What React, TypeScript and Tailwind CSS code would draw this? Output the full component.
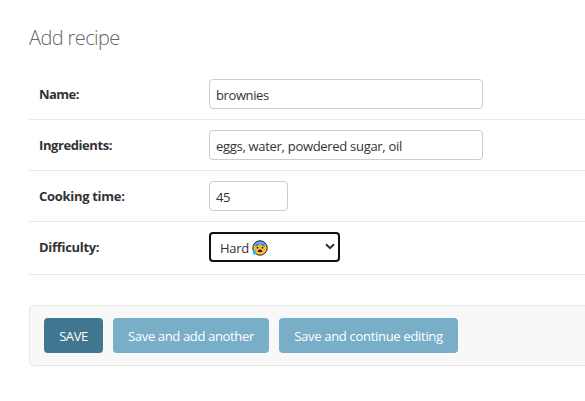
import React from 'react';

function AnxiousFace() {
  return (
    <svg className="ml-[3px] mb-[2px] h-4 w-4 shrink-0" viewBox="0 0 16 16" aria-label="Anxious face with sweat">
      <circle cx="8" cy="8" r="7.2" fill="#fdbb2c" />
      <path d="M1.100 6.600C1.800 2.900 4.600.8 8 .8s6.200 2.100 6.900 5.800C12.800 6 10.500 5.400 8 5.400S3.200 6 1.100 6.600Z" fill="#69a9e6" />
      <circle cx="8" cy="8" r="7.2" fill="none" stroke="#25282c" strokeWidth="1" />
      <path d="M4 5.600 6 4.400M10 4.400l2 1.200" stroke="#30343a" strokeWidth=".8" strokeLinecap="round" />
      <circle cx="5.500" cy="7.700" r=".9" fill="#222" />
      <circle cx="10.500" cy="7.700" r=".9" fill="#222" />
      <path d="M5.700 12c.3-1.700 1.100-2.400 2.300-2.400s2 .7 2.300 2.400Z" fill="#222" />
      <path d="M2.500 9.300C1.500 10.700.7 11.900.7 13a1.800 1.800 0 0 0 3.600 0c0-1.100-.8-2.300-1.800-3.700Z" fill="#22bdf2" />
    </svg>
  );
}

function Row({ label, last = false, children }: { label: React.ReactNode; last?: boolean; children: React.ReactNode }) {
  return (
    <div className={`flex items-start border-b border-[#e8e8e8] pl-2.5 pt-2.5 ${last ? 'h-[53px]' : 'h-[51px]'}`}>
      <div className="w-[170px] pt-[5px] text-[13px] leading-5 font-bold text-[#333]">{label}</div>
      {children}
    </div>
  );
}

const field = 'h-[30px] rounded-[4px] border border-[#ccc] bg-white px-1.5 pt-[1px] text-[13px] text-[#333] outline-none';
const button = 'h-[35px] rounded-[4px] text-[13px] text-white pt-[2px]';

export default function App() {
  return (
    <main className="h-[401px] w-[585px] overflow-hidden bg-white pl-[29px] pt-[25px] font-['Open_Sans','Noto_Sans',sans-serif]">
      <h1 className="h-[44px] text-[20px] leading-[26px] font-light text-[#666]"><span className="tracking-[-0.6px]">Add recipe</span></h1>
      <form onSubmit={(e) => e.preventDefault()}>
        <Row label={<span className="tracking-[-0.55px]">Name:</span>}>
          <input className={`${field} w-[274px] tracking-[-0.4px]`} defaultValue="brownies" />
        </Row>
        <Row label={<span className="tracking-[-0.42px]">Ingredients:</span>}>
          <input className={`${field} w-[274px] tracking-[-0.3px]`} defaultValue="eggs, water, powdered sugar, oil" />
        </Row>
        <Row label={<span className="tracking-[-0.3px]">Cooking time:</span>}>
          <input className={`${field} w-[79px] tracking-[-0.5px]`} defaultValue="45" />
        </Row>
        <Row last label={<span className="tracking-[-0.3px]">Difficulty:</span>}>
          <button type="button" className="flex h-[30px] w-[131px] items-center rounded-[4px] border-2 border-[#101010] pl-[9px] pr-[3px] pt-[3px] text-[13px] text-[#333]">
            <span className="tracking-[-0.3px]">Hard</span>
            <AnxiousFace />
            <svg className="ml-auto mb-[4px] h-[7px] w-[10px]" viewBox="0 0 10 7" fill="none">
              <path d="m1 1.200 4 4 4-4" stroke="#333" strokeWidth="2" />
            </svg>
          </button>
        </Row>
        <div className="mt-[30px] flex h-[61px] w-[600px] gap-2.5 rounded-[4px] border border-[#e8e8e8] bg-[#f8f8f8] pl-[14px] pt-3">
          <button className={`${button} w-[59px] bg-[#417690]`}><span className="tracking-[-0.4px]">SAVE</span></button>
          <button className={`${button} w-[156px] bg-[#79aec8]`}><span className="tracking-[-0.35px]">Save and add another</span></button>
          <button className={`${button} w-[179px] bg-[#79aec8]`}><span className="tracking-[-0.3px]">Save and continue editing</span></button>
        </div>
      </form>
    </main>
  );
}
